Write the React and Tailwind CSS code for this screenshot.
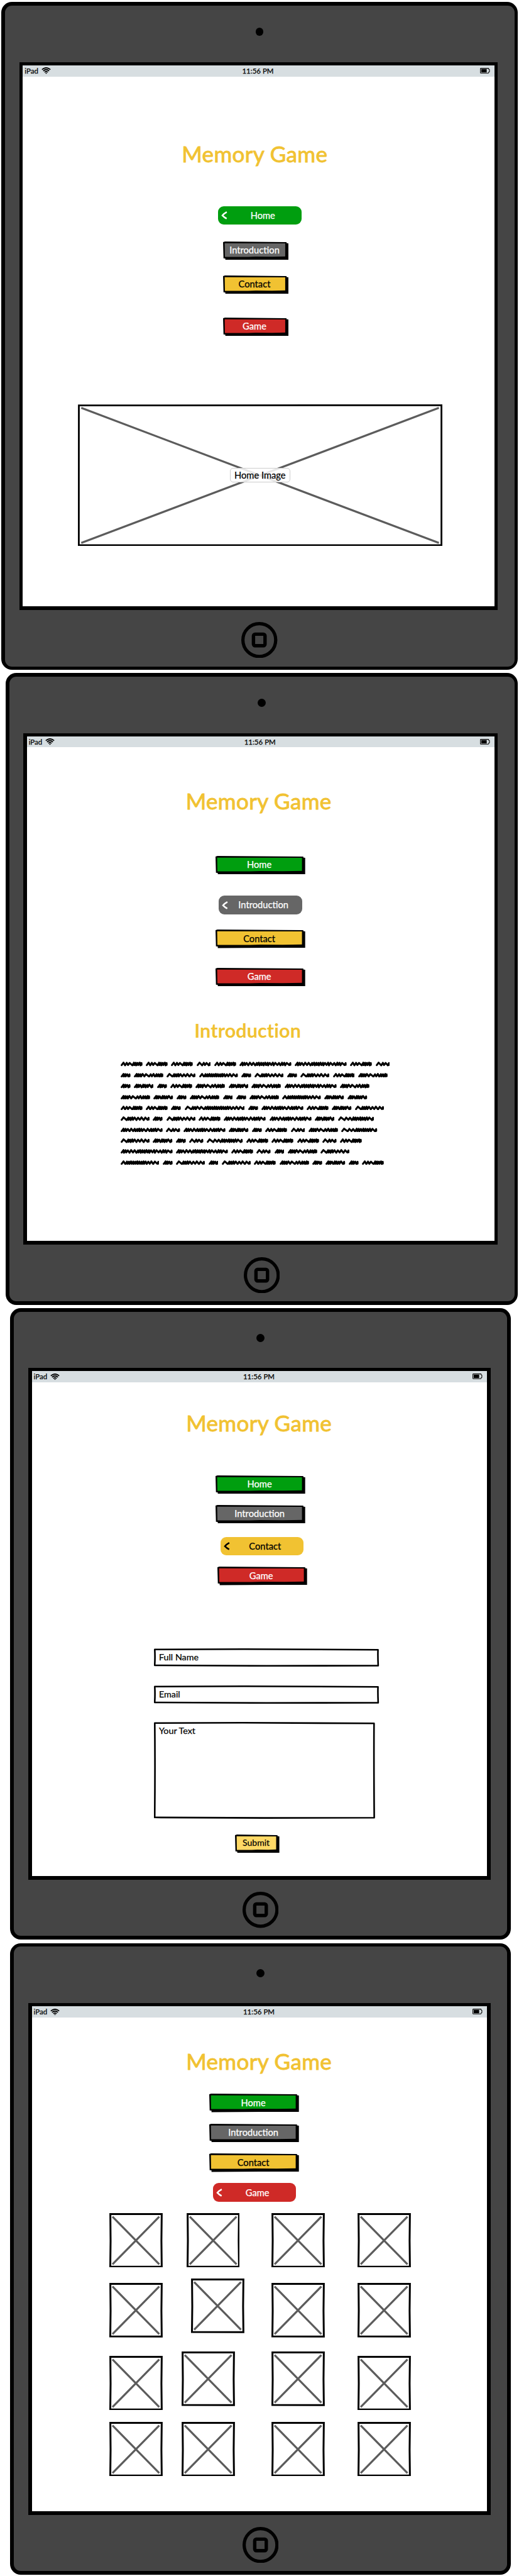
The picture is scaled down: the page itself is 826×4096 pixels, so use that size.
const SKINS = {
  green: { face: '#009e0f', ink: 'text-white', bg: 'bg-[#009e0f]' },
  gray: { face: '#666666', ink: 'text-white', bg: 'bg-[#666666]' },
  yellow: { face: '#f1c232', ink: 'text-black', bg: 'bg-[#f1c232]' },
  red: { face: '#cf2a27', ink: 'text-white', bg: 'bg-[#cf2a27]' },
  amber: { face: '#ffd966', ink: 'text-black', bg: 'bg-[#ffd966]' },
};

function Wifi() {
  return (
    <svg className="h-[10.6px] w-[15px]" viewBox="0 0 15 10.6" fill="none" stroke="#000" strokeWidth="1.7">
      <path d="M0.8 3.6Q7.5 -2 14.2 3.6" />
      <path d="M2.8 5.9Q7.5 1.6 12.2 5.9" />
      <path d="M4.9 8Q7.5 5.5 10.1 8" />
      <path d="M6 9.2Q7.5 8.2 9 9.2L7.5 10.6Z" fill="#000" stroke="none" />
    </svg>
  );
}

function Battery() {
  return (
    <svg className="h-[9px] w-[16px]" viewBox="0 0 16 9" fill="none">
      <path d="M1.4 0.6H13.3Q13.9 0.7 13.9 2.2L14.9 2.7V6.1L13.9 6.6Q13.9 8.2 13.3 8.3H1.4Q0.6 8.3 0.6 7.5V1.4Q0.6 0.6 1.4 0.6Z" stroke="#000" strokeWidth="1.1" />
      <rect x="1.9" y="1.8" width="8.7" height="5.4" fill="#000" />
    </svg>
  );
}

function Device({ outer, bezel, frame, children }) {
  return (
    <section className={`flex shrink-0 flex-col rounded-[17px] bg-black p-[5.5px] ${outer}`}>
      <div className="flex flex-1 flex-col rounded-[11px] bg-[#454545]">
        <div className={`flex shrink-0 justify-center pt-[35.6px] ${bezel}`}>
          <span className="h-[12.6px] w-[12.6px] rounded-full bg-black" />
        </div>
        <div className={`flex shrink-0 flex-col bg-black px-[5.3px] pt-[5px] pb-[6px] ${frame}`}>
          <div className="flex h-[17.5px] shrink-0 items-center justify-between bg-[#d7dee1] pl-[3px] pr-[7px] text-[11.5px] leading-[17px] [-webkit-text-stroke:0.25px_currentColor]">
            <span className="flex w-[60px] items-center gap-[5px]">
              iPad
              <Wifi />
            </span>
            <span className="pl-[2px]">11:56 PM</span>
            <span className="flex w-[60px] justify-end">
              <Battery />
            </span>
          </div>
          <div className="flex flex-1 flex-col items-start bg-white">{children}</div>
        </div>
        <div className="flex justify-center pt-[19.4px]">
          <svg className="h-[57.4px] w-[57.4px]" viewBox="0 0 57.4 57.4" fill="none" stroke="#000">
            <circle cx="28.7" cy="28.7" r="26.1" strokeWidth="5.2" />
            <rect x="19.4" y="19.4" width="18.4" height="18.4" rx="2.6" strokeWidth="5.4" />
          </svg>
        </div>
      </div>
    </section>
  );
}

function Title({ className }) {
  return (
    <h1 className={`h-[40px] whitespace-nowrap text-[35px] leading-[40px] tracking-[0.35px] text-[#f1c232] [-webkit-text-stroke:0.9px_#f1c232] ${className}`}>
      Memory Game
    </h1>
  );
}

function NavButton({ skin, w = 142.7, className = '', textClass = 'text-[14.7px]', children }) {
  const h = 29.5;
  const s = SKINS[skin];
  const shape = `0,0.9 3,0 ${w - 3},0.9 ${w - 3},2.6 ${w},2.9 ${w},28.9 ${w * 0.57},29 3.6,29.5 3.6,27 0.7,26.8`;
  const face = `2.6,2.7 ${w - 5.1},3.1 ${w - 5.1},23.8 ${w * 0.75},24.3 ${w * 0.5},24 ${w * 0.38},24.4 3,24.5`;
  return (
    <button className={`relative flex h-[29.5px] shrink-0 items-center justify-center pb-[2.6px] pr-[3.4px] [-webkit-text-stroke:0.25px_currentColor] ${s.ink} ${className}`}>
      <svg className="absolute inset-0 h-full w-full" viewBox={`0 0 ${w} ${h}`} preserveAspectRatio="none">
        <polygon points={shape} fill="#000" />
        <polygon points={face} fill={s.face} />
      </svg>
      <span className={`relative leading-[18px] whitespace-nowrap ${textClass}`}>{children}</span>
    </button>
  );
}

function BackButton({ skin, className, children }) {
  const s = SKINS[skin];
  return (
    <button className={`flex h-[29.7px] w-[132.4px] shrink-0 items-center rounded-[9px] pb-[1px] [-webkit-text-stroke:0.25px_currentColor] ${s.bg} ${s.ink} ${className}`}>
      <svg className="ml-[5px] mt-[2px] h-[13px] w-[10px] shrink-0" viewBox="0 0 10 13" fill="none" stroke="currentColor" strokeWidth="2.5">
        <path d="M8.9 1.2Q4.5 3.6 2 6.6Q5 9.8 8.7 11.6" />
      </svg>
      <span className="flex-1 pr-[5.4px] text-center text-[14.7px] leading-[18px]">{children}</span>
    </button>
  );
}

function Field({ w, h, className, children }) {
  const d = `M1.3 1.8L${w * 0.4} 1.3L${w - 1.6} 2.2Q${w - 2} ${h * 0.4} ${w - 1.3} ${h - 1.5}L${w * 0.5} ${h - 1.2}L1.2 ${h - 2}Q2 ${h * 0.5} 1.3 1.8Z`;
  return (
    <div className={`relative shrink-0 pl-[7.5px] pt-[5px] text-[14.3px] leading-[18px] [-webkit-text-stroke:0.25px_currentColor] ${className}`}>
      <svg className="absolute inset-0 h-full w-full" viewBox={`0 0 ${w} ${h}`} fill="none" stroke="#000" strokeWidth="2.6" strokeLinejoin="round">
        <path d={d} />
      </svg>
      <span className="relative">{children}</span>
    </div>
  );
}

function Card({ className = '' }) {
  return (
    <svg className={`h-[86.7px] w-[84.8px] shrink-0 ${className}`} viewBox="0 0 84.8 86.7" fill="none">
      <path d="M5 5.6L79.5 81.5M79.5 5.6L5 81.5" stroke="#5c5c5c" strokeWidth="3.2" />
      <path d="M1.6 1.6L83.4 1.5L82.9 44L83.4 85.2L1.5 85L2 44Z" stroke="#000" strokeWidth="3" />
    </svg>
  );
}

// Each word shape: width, then the advances of its pen strokes.
const WORDS = {
  a: [15.8, [2, 2, 3]],
  n: [22.7, [4.6, 3, 4.2]],
  m: [31.4, [2, 2, 3.2, 2, 2.4, 2.4, 4]],
  s: [34.9, [3.7, 3.4, 5, 2.2, 2.2, 2.4, 2.6]],
  D: [47, [2, 2, 2.2, 3.6, 5, 3, 3.2, 2.2, 2.4, 2]],
  S: [46.2, [5, 2, 2.2, 2.4, 3.6, 3.6, 4, 4]],
  g: [57.4, [5, 3.6, 3.4, 2, 2, 2.4, 2, 2, 2.2, 2.4, 4]],
  k: [61.7, [3.4, 2, 2, 2.2, 2, 2, 2, 2.2, 2, 2, 2.6, 3, 3.4, 4]],
  t: [66.9, [2, 2.2, 3.2, 3.4, 2.4, 2, 2, 2.4, 3.6, 3.4, 2.2, 2, 2.4, 4]],
  w: [82.8, [2, 2.2, 3.2, 3.4, 3.4, 2, 2.2, 2, 2, 2.4, 2, 3, 2.4, 3.6, 3, 2.2, 2.4, 4]],
  x: [95.8, [5, 2, 2.2, 3.6, 4.2, 2.2, 2, 2, 2.2, 2, 2, 2.2, 2, 2.2, 2, 2.2, 3, 3.2, 3.4, 4]],
};
const LINES = ['sssnswwsn', 'aDSkaSaSsD', 'amasDmDwD', 'DmaDaaDkmm', 'ssaxatsmS', 'SaSsttmg', 'tntmasnDg', 'Smangsssns', 'wwsnaDS', 'kaSaSsDamas'];

function Word({ kind }) {
  const [w, adv] = WORDS[kind];
  const sum = adv.reduce((p, c) => p + c, 0);
  const k = (w - 5.4) / sum;
  let x = 1.6;
  let d = `M${x} 5.6`;
  adv.forEach((a, i) => {
    const top = 1.7 + (i % 3) * 0.25;
    const low = 6 - (i % 2) * 0.5;
    d += `L${x + 3} ${top}`;
    x += a * k;
    d += `L${x + 0.4} ${low}`;
  });
  d += `L${w - 1.7} 2.4L${w - 1.6} 5.2`;
  return (
    <svg style={{ width: w }} className="h-[7.6px] shrink-0" viewBox={`0 0 ${w} 7.6`} fill="none" stroke="#000" strokeWidth="3" strokeLinecap="round" strokeLinejoin="round">
      <path d={d} />
    </svg>
  );
}

export default function App() {
  return (
    <main className="flex h-[4096px] w-[826px] flex-col items-start overflow-hidden bg-white pt-[3px] font-[Lato,sans-serif] text-black">
      <Device outer="ml-[2px] w-[822px] h-[1062px]" bezel="h-[90.5px]" frame="ml-[23.5px] w-[761px] h-[870.6px]">
        <Title className="mt-[102px] ml-[253px]" />
        <BackButton skin="green" className="mt-[64px] ml-[311px]">Home</BackButton>
        <NavButton skin="gray" w={104} className="mt-[26.4px] ml-[318.4px] w-[104px]">Introduction</NavButton>
        <NavButton skin="yellow" w={104} className="mt-[24.7px] ml-[318.4px] w-[104px]">Contact</NavButton>
        <NavButton skin="red" w={104} className="mt-[37.6px] ml-[318.4px] w-[104px]">Game</NavButton>
        <div className="relative mt-[108.5px] ml-[87.5px] flex h-[225.2px] w-[580px] items-center justify-center">
          <svg className="absolute inset-0 h-full w-full" viewBox="0 0 580 225.2" fill="none">
            <path d="M5.3 5.6L574.5 220.3M574.5 5.6L5.3 220.3" stroke="#5c5c5c" strokeWidth="3.2" />
            <path d="M1.5 1.6L578.6 1.3L578.6 223.8L1.4 224Z" stroke="#000" strokeWidth="2.8" />
          </svg>
          <span className="relative flex h-[23px] w-[96px] items-center justify-center rounded-[5px] border border-[#cccccc] bg-white/85 pb-[1px] text-[14.7px] leading-[18px] whitespace-nowrap [-webkit-text-stroke:0.25px_currentColor]">
            Home Image
          </span>
        </div>
      </Device>

      <Device outer="mt-[5.4px] ml-[9px] w-[815px] h-[1004.3px]" bezel="h-[89.8px]" frame="ml-[22.9px] w-[754.6px] h-[813.7px]">
        <Title className="mt-[64.7px] ml-[253px]" />
        <NavButton skin="green" className="mt-[67.7px] ml-[300.3px] w-[142.7px]">Home</NavButton>
        <BackButton skin="gray" className="mt-[34px] ml-[305.5px]">Introduction</BackButton>
        <NavButton skin="yellow" className="mt-[24.5px] ml-[300.3px] w-[142.7px]">Contact</NavButton>
        <NavButton skin="red" className="mt-[31.2px] ml-[300.3px] w-[142.7px]">Game</NavButton>
        <h2 className="mt-[51.5px] ml-[266.5px] h-[36px] whitespace-nowrap text-[30.5px] leading-[36px] font-bold tracking-[0.1px] text-[#f1c232]">Introduction</h2>
        <div className="mt-[32.4px] ml-[149.1px] flex flex-col gap-[9.8px]">
          {LINES.map((line, i) => (
            <div key={i} className="flex gap-[5.4px]">
              {line.split('').map((kind, j) => (
                <Word key={j} kind={kind} />
              ))}
            </div>
          ))}
        </div>
      </Device>

      <Device outer="mt-[5.6px] ml-[16.4px] w-[796.5px] h-[1003.7px]" bezel="h-[89.4px]" frame="ml-[23.4px] w-[735.4px] h-[813.6px]">
        <Title className="mt-[44.8px] ml-[245.6px]" />
        <NavButton skin="green" className="mt-[63.3px] ml-[292.9px] w-[142.7px]">Home</NavButton>
        <NavButton skin="gray" className="mt-[17.7px] ml-[292.9px] w-[142.7px]">Introduction</NavButton>
        <BackButton skin="yellow" className="mt-[21.1px] ml-[300.2px]">Contact</BackButton>
        <NavButton skin="red" className="mt-[18.1px] ml-[295.4px] w-[142.7px]">Game</NavButton>
        <Field w={358.2} h={29} className="mt-[100.3px] ml-[194.9px] h-[29px] w-[358.2px]">Full Name</Field>
        <Field w={358.2} h={29} className="mt-[29.4px] ml-[194.9px] h-[29px] w-[358.2px]">Email</Field>
        <Field w={351.9} h={153.8} className="mt-[29.5px] ml-[194.9px] h-[153.8px] w-[351.9px]">Your Text</Field>
        <NavButton skin="amber" w={70.6} textClass="text-[14px]" className="mt-[25.1px] ml-[323.4px] w-[70.6px]">Submit</NavButton>
      </Device>

      <Device outer="mt-[6px] ml-[16.4px] w-[796.5px] h-[1003.8px]" bezel="h-[89.7px]" frame="ml-[23.4px] w-[735.4px] h-[813.5px]">
        <Title className="mt-[49.2px] ml-[245.6px]" />
        <NavButton skin="green" className="mt-[32.6px] ml-[282.9px] w-[142.7px]">Home</NavButton>
        <NavButton skin="gray" className="mt-[17.7px] ml-[282.9px] w-[142.7px]">Introduction</NavButton>
        <NavButton skin="yellow" className="mt-[18px] ml-[282.9px] w-[142.7px]">Contact</NavButton>
        <BackButton skin="red" className="mt-[17.6px] ml-[288.1px]">Game</BackButton>
        <div className="mt-[17.6px] ml-[123.8px] flex">
          <Card />
          <Card className="ml-[37.4px]" />
          <Card className="ml-[51.1px]" />
          <Card className="ml-[51.7px]" />
        </div>
        <div className="mt-[18.3px] ml-[123.8px] flex">
          <Card className="mt-[6.5px]" />
          <Card className="ml-[45.3px]" />
          <Card className="mt-[6.5px] ml-[43.2px]" />
          <Card className="mt-[6.5px] ml-[51.7px]" />
        </div>
        <div className="mt-[22.5px] ml-[123.8px] flex">
          <Card className="mt-[6.4px]" />
          <Card className="ml-[30px]" />
          <Card className="ml-[58.5px]" />
          <Card className="mt-[6.4px] ml-[51.7px]" />
        </div>
        <div className="mt-[18.3px] ml-[123.8px] flex">
          <Card />
          <Card className="ml-[30px]" />
          <Card className="ml-[58.5px]" />
          <Card className="ml-[51.7px]" />
        </div>
      </Device>
    </main>
  );
}
